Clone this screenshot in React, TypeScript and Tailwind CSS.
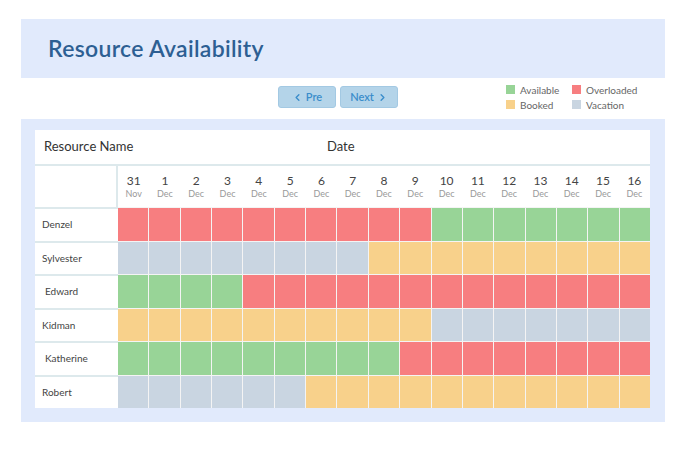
import { ChevronLeft, ChevronRight } from "lucide-react";

type Status = "A" | "O" | "B" | "V";

const colors: Record<Status, string> = {
  A: "bg-[#98d497]",
  O: "bg-[#f77e80]",
  B: "bg-[#f8d18b]",
  V: "bg-[#c9d5e1]",
};

const dates = [
  { d: "31", m: "Nov" },
  ...Array.from({ length: 16 }, (_, i) => ({ d: String(i + 1), m: "Dec" })),
];

// how many days of the first status, then the rest
const rows: { name: string; indent?: boolean; first: Status; count: number; rest: Status }[] = [
  { name: "Denzel", first: "O", count: 10, rest: "A" },
  { name: "Sylvester", first: "V", count: 8, rest: "B" },
  { name: "Edward", indent: true, first: "A", count: 4, rest: "O" },
  { name: "Kidman", first: "B", count: 10, rest: "V" },
  { name: "Katherine", indent: true, first: "A", count: 9, rest: "O" },
  { name: "Robert", first: "V", count: 6, rest: "B" },
];

const legend: { label: string; s: Status }[] = [
  { label: "Available", s: "A" },
  { label: "Overloaded", s: "O" },
  { label: "Booked", s: "B" },
  { label: "Vacation", s: "V" },
];

export default function App() {
  return (
    <div className="w-[686px] h-[458px] bg-white pt-[19px] px-[21px] font-['Lato','Open_Sans',sans-serif]">
      <div className="h-[59px] bg-[#e1eafc] flex items-center pl-[27px]">
        <h1 className="text-[23px] font-semibold text-[#2d5f93] tracking-[0.3px]">Resource Availability</h1>
      </div>

      <div className="h-[41px] flex items-start pt-[8px]">
        <div className="ml-[257px] flex gap-[4px]">
          <button className="w-[58px] h-[22px] rounded-[3px] bg-[#b4d4e9] border border-[#a3c9e3] text-[#3a8dcb] text-[11px] font-semibold flex items-center justify-center gap-[3px]">
            <ChevronLeft size={11} strokeWidth={3} />
            Pre
          </button>
          <button className="w-[58px] h-[22px] rounded-[3px] bg-[#b4d4e9] border border-[#a3c9e3] text-[#3a8dcb] text-[11px] font-semibold flex items-center justify-center gap-[3px]">
            Next
            <ChevronRight size={11} strokeWidth={3} />
          </button>
        </div>
        <div className="ml-[108px] grid grid-cols-[66px_80px] gap-y-[4px] -mt-[2px]">
          {legend.map((l) => (
            <div key={l.label} className="flex items-center gap-[5px] h-[11px]">
              <span className={`w-[9px] h-[9px] ${colors[l.s]}`} />
              <span className="text-[10px] text-[#666] leading-none">{l.label}</span>
            </div>
          ))}
        </div>
      </div>

      <div className="h-[303px] bg-[#e1eafc] pt-[11px] px-[14px]">
        <div className="w-[615px] h-[278px] bg-white flex flex-col">
          <div className="h-[36px] flex items-center border-b-2 border-[#dde9ec] text-[13px] text-[#333]">
            <span className="pl-[9px] w-[292px]">Resource Name</span>
            <span>Date</span>
          </div>

          <div className="h-[41px] flex">
            <div className="w-[83px] border-r-2 border-[#dde9ec]" />
            <div className="flex-1 grid grid-cols-[repeat(17,1fr)] pt-[8px]">
              {dates.map((d) => (
                <div key={d.d + d.m} className="flex flex-col items-center">
                  <span className="text-[12px] text-[#444] leading-[14px]">{d.d}</span>
                  <span className="text-[9px] text-[#999] leading-[12px]">{d.m}</span>
                </div>
              ))}
            </div>
          </div>

          <div className="flex-1 flex flex-col">
            {rows.map((r) => (
              <div key={r.name} className="flex-1 flex">
                <div className={`w-[83px] border-t-2 border-[#dde9ec] flex items-center text-[10px] text-[#444] ${r.indent ? "pl-[10px]" : "pl-[7px]"}`}>
                  {r.name}
                </div>
                <div className="flex-1 grid grid-cols-[repeat(17,1fr)] gap-px bg-[#f4f4f4] pt-px">
                  {dates.map((d, i) => (
                    <div key={d.d + d.m} className={i < r.count ? colors[r.first] : colors[r.rest]} />
                  ))}
                </div>
              </div>
            ))}
          </div>
        </div>
      </div>
    </div>
  );
}
